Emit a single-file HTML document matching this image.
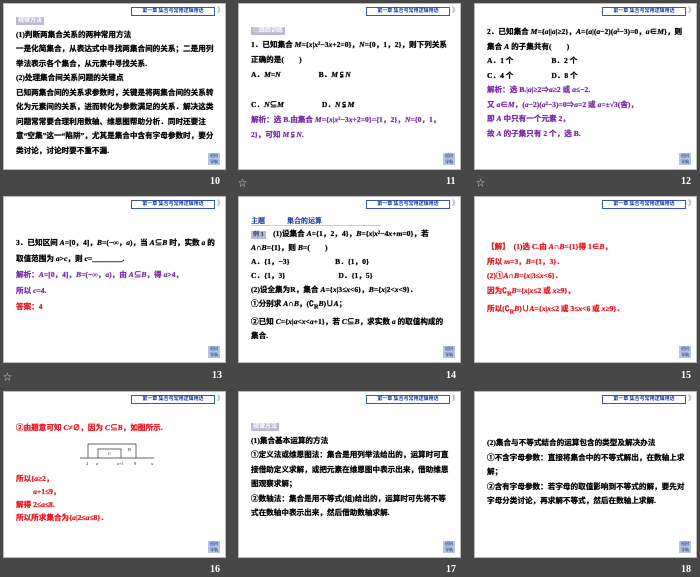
<!DOCTYPE html>
<html><head><meta charset="utf-8"><style>
*{margin:0;padding:0;box-sizing:border-box}
body{width:700px;height:577px;background:#474747;position:relative;overflow:hidden;font-family:"Liberation Serif","Noto Serif CJK SC","Noto Sans CJK SC",serif}
.s{position:absolute;width:223px;height:167px;background:#fff;border:1px solid #bbb;overflow:hidden}
.hd{position:absolute;right:10px;top:3px;width:84px;height:9px;border:1px solid #3355bb;background:#fff;font-size:5px;color:#1a3aa0;font-weight:bold;line-height:7px;text-align:center;font-family:"Liberation Sans","Noto Sans CJK SC",sans-serif}
.hd:after{content:"》";position:absolute;right:-10px;top:-1px;color:#9ab;font-size:7px}
.ic{position:absolute;right:5px;bottom:4px;width:12px;height:12px;background:#b8c4dc;color:#1f3fa8;font-size:4px;line-height:6px;text-align:center;font-weight:bold}
.t{position:absolute;left:12px;right:10px;font-size:7.6px;font-weight:bold;color:#000;line-height:14.5px;font-family:"Liberation Serif","Noto Sans CJK SC",serif;-webkit-text-stroke:0.25px currentColor}
.tag{display:inline-block;background:#b9b9cf;color:#fff;font-size:6px;line-height:8px;padding:0 2px;-webkit-text-stroke:0}
.p{color:#7a2aa8}.r{color:#e8131b}
.n{position:absolute;color:#fff;font-weight:bold;font-size:10px;font-family:"Liberation Serif",serif}
.st{position:absolute;color:#ccc;font-size:9px}
</style></head><body>

<div class="s" style="left:3px;top:3px"><div class="hd">第一章 集合与常用逻辑用语</div>
<div class="t" style="top:9px"><span class="tag">规律方法</span><br>(1)判断两集合关系的两种常用方法<br>一是化简集合，从表达式中寻找两集合间的关系；二是用列举法表示各个集合，从元素中寻找关系.<br>(2)处理集合间关系问题的关键点<br>已知两集合间的关系求参数时，关键是将两集合间的关系转化为元素间的关系，进而转化为参数满足的关系．解决这类问题常常要合理利用数轴、维恩图帮助分析．同时还要注意“空集”这一“陷阱”，尤其是集合中含有字母参数时，要分类讨论，讨论时要不重不漏.</div><div class="ic">返回<br>导航</div></div>

<div class="s" style="left:238px;top:3px"><div class="hd">第一章 集合与常用逻辑用语</div>
<div class="t" style="top:18px;line-height:15px"><span class="tag">◎跟踪训练</span><br>1．已知集合 <i>M</i>={<i>x</i>|<i>x</i>²−3<i>x</i>+2=0}，<i>N</i>={0，1，2}，则下列关系正确的是(　　)<br>A．<i>M</i>=<i>N</i>　　　　　B．<i>M</i> ⫋ <i>N</i><br><br>C．<i>N</i>⊆<i>M</i>　　　　　D．<i>N</i> ⫋ <i>M</i><br><span class="p">解析：选 B.由集合 <i>M</i>={<i>x</i>|<i>x</i>²−3<i>x</i>+2=0}={1，2}，<i>N</i>={0，1，2}，可知 <i>M</i> ⫋ <i>N</i>.</span></div><div class="ic">返回<br>导航</div></div>

<div class="s" style="left:474px;top:3px"><div class="hd">第一章 集合与常用逻辑用语</div>
<div class="t" style="top:21px"><span>2．已知集合 <i>M</i>={<i>a</i>||<i>a</i>|≥2}，<i>A</i>={<i>a</i>|(<i>a</i>−2)(<i>a</i>²−3)=0，<i>a</i>∈<i>M</i>}，则集合 <i>A</i> 的子集共有(　　)</span><br>A．1 个　　　　　B．2 个<br>C．4 个　　　　　D．8 个<br><span class="p">解析：选 B.|<i>a</i>|≥2⇒<i>a</i>≥2 或 <i>a</i>≤−2.<br>又 <i>a</i>∈<i>M</i>，(<i>a</i>−2)(<i>a</i>²−3)=0⇒<i>a</i>=2 或 <i>a</i>=±√3(舍)，<br>即 <i>A</i> 中只有一个元素 2，<br>故 <i>A</i> 的子集只有 2 个，选 B.</span></div><div class="ic">返回<br>导航</div></div>

<div class="n" style="left:210px;top:176px">10</div><div class="st" style="left:238px;top:176px">☆</div>
<div class="n" style="left:446px;top:176px">11</div><div class="st" style="left:476px;top:176px">☆</div>
<div class="n" style="left:681px;top:176px">12</div>

<div class="s" style="left:3px;top:196px"><div class="hd">第一章 集合与常用逻辑用语</div>
<div class="t" style="top:38px;line-height:16px">3．已知区间 <i>A</i>=[0，4]，<i>B</i>=(−∞，<i>a</i>)，当 <i>A</i>⊆<i>B</i> 时，实数 <i>a</i> 的取值范围为 <i>a</i>&gt;<i>c</i>，则 <i>c</i>=________.<br><span class="p">解析：<i>A</i>=[0，4]，<i>B</i>=(−∞，<i>a</i>)，由 <i>A</i>⊆<i>B</i>，得 <i>a</i>&gt;4，<br>所以 <i>c</i>=4.</span><br><span class="r">答案：4</span></div><div class="ic">返回<br>导航</div></div>

<div class="s" style="left:238px;top:196px"><div class="hd">第一章 集合与常用逻辑用语</div>
<div style="position:absolute;left:12px;top:19px;font-size:7px;font-weight:bold;color:#1f3fa8;-webkit-text-stroke:0.25px #1f3fa8">主题<span style="margin-left:22px">集合的运算</span></div>
<div style="position:absolute;left:12px;top:28px;width:130px;height:1px;background:#ccd"></div>
<div class="t" style="top:30px;line-height:14px"><span class="tag" style="background:#b7bcd6;color:#335">例 3</span>　(1)设集合 <i>A</i>={1，2，4}，<i>B</i>={<i>x</i>|<i>x</i>²−4<i>x</i>+<i>m</i>=0}，若 <i>A</i>∩<i>B</i>={1}，则 <i>B</i>=(　　)<br>A．{1，−3}　　　　　　B．{1，0}<br>C．{1，3}　　　　　　　D．{1，5}<br>(2)设全集为R，集合 <i>A</i>={<i>x</i>|3≤<i>x</i>&lt;6}，<i>B</i>={<i>x</i>|2&lt;<i>x</i>&lt;9}．<br>①分别求 <i>A</i>∩<i>B</i>，(∁<sub>R</sub><i>B</i>)∪<i>A</i>；<br>②已知 <i>C</i>={<i>x</i>|<i>a</i>&lt;<i>x</i>&lt;<i>a</i>+1}，若 <i>C</i>⊆<i>B</i>，求实数 <i>a</i> 的取值构成的集合.</div><div class="ic">返回<br>导航</div></div>

<div class="s" style="left:474px;top:196px"><div class="hd">第一章 集合与常用逻辑用语</div>
<div class="t r" style="top:43px;line-height:14.5px">【解】　(1)选 C.由 <i>A</i>∩<i>B</i>={1}得 1∈<i>B</i>，<br>所以 <i>m</i>=3，<i>B</i>={1，3}．<br>(2)①<i>A</i>∩<i>B</i>={<i>x</i>|3≤<i>x</i>&lt;6}．<br>因为∁<sub>R</sub><i>B</i>={<i>x</i>|<i>x</i>≤2 或 <i>x</i>≥9}，<br>所以(∁<sub>R</sub><i>B</i>)∪<i>A</i>={<i>x</i>|<i>x</i>≤2 或 3≤<i>x</i>&lt;6 或 <i>x</i>≥9}．</div><div class="ic">返回<br>导航</div></div>

<div class="n" style="left:212px;top:370px">13</div><div class="st" style="left:3px;top:370px">☆</div>
<div class="n" style="left:446px;top:370px">14</div>
<div class="n" style="left:681px;top:370px">15</div>

<div class="s" style="left:3px;top:391px"><div class="hd">第一章 集合与常用逻辑用语</div>
<div class="t r" style="top:29px">②由题意可知 <i>C</i>≠∅，因为 <i>C</i>⊆<i>B</i>，如图所示.</div>
<svg style="position:absolute;left:74px;top:46px" width="80" height="30" viewBox="0 0 80 30"><g stroke="#333" stroke-width="0.7" fill="none"><path d="M2 20H76"/><path d="M10 20V6H58V20"/><path d="M20 20V11H43V20"/></g><g font-size="4.5" fill="#222" font-family="Liberation Serif"><text x="8" y="27">2</text><text x="18" y="27">a</text><text x="39" y="27">a+1</text><text x="56" y="27">9</text><text x="73" y="27">x</text><text x="30" y="17">C</text><text x="50" y="13">B</text></g></svg>
<div class="t r" style="top:80px;line-height:13px">所以{<i>a</i>≥2，<br>　　 <i>a</i>+1≤9，<br>解得 2≤<i>a</i>≤8.<br>所以所求集合为{<i>a</i>|2≤<i>a</i>≤8}．</div><div class="ic">返回<br>导航</div></div>

<div class="s" style="left:238px;top:391px"><div class="hd">第一章 集合与常用逻辑用语</div>
<div class="t" style="top:27px"><span class="tag">规律方法</span><br>(1)集合基本运算的方法<br>①定义法或维恩图法：集合是用列举法给出的，运算时可直接借助定义求解，或把元素在维恩图中表示出来，借助维恩图观察求解；<br>②数轴法：集合是用不等式(组)给出的，运算时可先将不等式在数轴中表示出来，然后借助数轴求解.</div><div class="ic">返回<br>导航</div></div>

<div class="s" style="left:474px;top:391px"><div class="hd">第一章 集合与常用逻辑用语</div>
<div class="t" style="top:44px">(2)集合与不等式结合的运算包含的类型及解决办法<br>①不含字母参数：直接将集合中的不等式解出，在数轴上求解；<br>②含有字母参数：若字母的取值影响到不等式的解，要先对字母分类讨论，再求解不等式，然后在数轴上求解.</div><div class="ic">返回<br>导航</div></div>

<div class="n" style="left:210px;top:564px">16</div>
<div class="n" style="left:446px;top:564px">17</div>
<div class="n" style="left:681px;top:564px">18</div>
</body></html>
